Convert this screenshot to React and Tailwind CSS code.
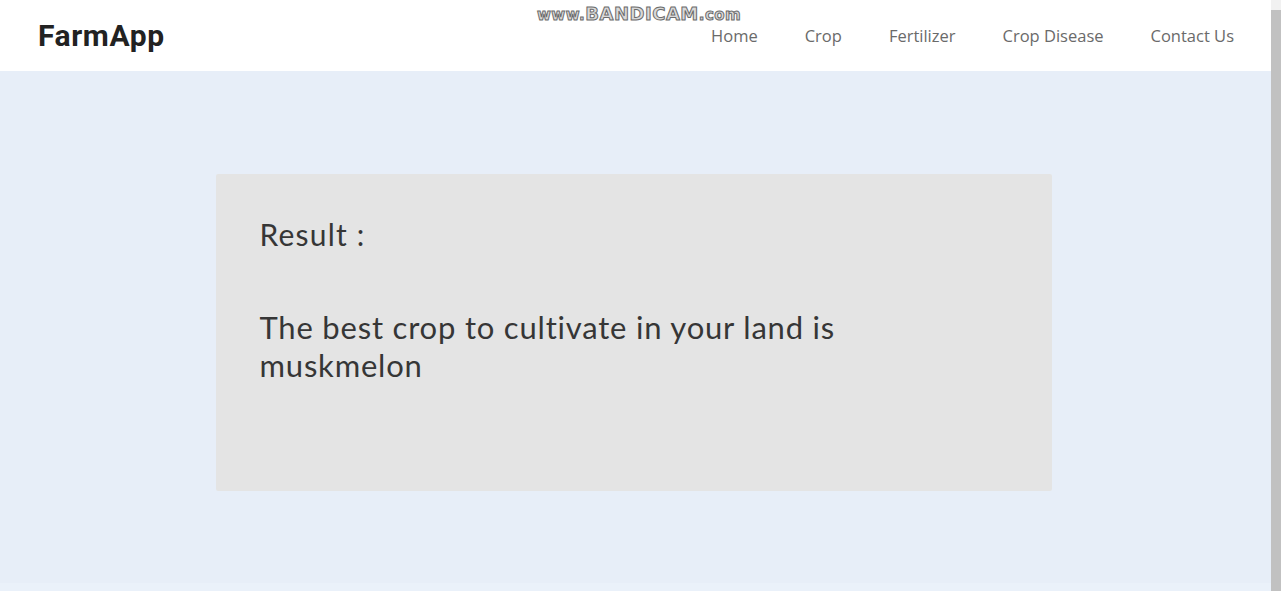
import React from 'react';

const links = ['Home', 'Crop', 'Fertilizer', 'Crop Disease', 'Contact Us'];

function App() {
  return (
    <div className="flex h-[591px] w-full overflow-hidden bg-[#e7eef8]">
      <div className="relative flex flex-1 flex-col">
        {/* navbar */}
        <nav className="flex h-[71px] items-center justify-between bg-white pl-[38px] pr-[37px]">
          <span className="font-['Roboto'] text-[30px] font-bold tracking-[0.6px] text-[#222]">FarmApp</span>
          <ul className="flex items-center gap-[47px] pt-[1px] font-['Open_Sans'] text-[16.5px] text-[#6a6a6a]">
            {links.map((l) => (
              <li key={l}>{l}</li>
            ))}
          </ul>
        </nav>

        {/* recorder watermark */}
        <div className="absolute left-[537px] top-[5px] flex items-end font-['DejaVu_Sans'] font-bold leading-none tracking-[0.5px] text-[#d9d9d9] [-webkit-text-stroke:1px_#6b6b6b]">
          <span className="text-[15px]">www.</span>
          <span className="text-[18px]">BANDICAM</span>
          <span className="text-[15px]">.com</span>
        </div>

        <main className="flex flex-1 justify-center pr-[4px] pt-[103px]">
          <div className="h-[317px] w-[836px] rounded-[2px] bg-[#e4e4e4] px-[44px] pt-[41px] font-['Lato'] text-[#363636]">
            <h3 className="text-[30px] leading-[38px] tracking-[1.2px]">Result :</h3>
            <p className="mt-[55px] max-w-[640px] text-[31px] leading-[38px] tracking-[0.8px]">
              The best crop to cultivate in your land is muskmelon
            </p>
          </div>
        </main>
        <div className="h-[8px] bg-[#eaf1fa]" />
      </div>

      {/* scrollbar */}
      <div className="flex w-[10px] flex-col bg-[#f1f1f1]">
        <div className="h-[10px]" />
        <div className="flex-1 bg-[#c1c1c1]" />
      </div>
    </div>
  );
}

export default App;
